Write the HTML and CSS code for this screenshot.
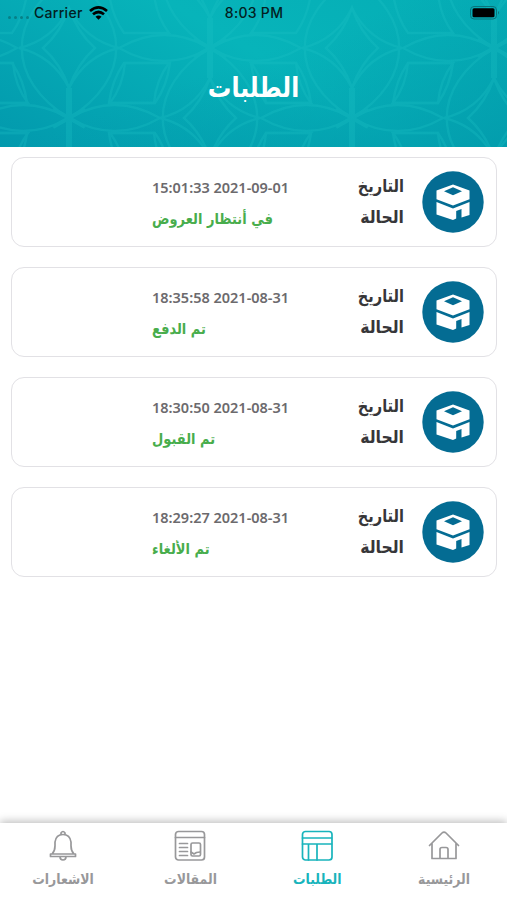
FILE: index.html
```html
<!DOCTYPE html>
<html lang="ar" dir="rtl">
<head>
<meta charset="utf-8">
<title>الطلبات</title>
<link rel="stylesheet" href="styles.css">
</head>
<body>
<svg class="defs" aria-hidden="true">
  <symbol id="kaaba" viewBox="0 0 62 62">
    <circle cx="31" cy="31" r="30.700" fill="#046c93"/>
    <path fill="#fff" fill-rule="evenodd" d="M31 13.500L47.500 19.500V28.200L31 34.500L14.500 28.200V19.500ZM31 16.300L22 20.200L31 24.300L40 20.200Z"/>
    <path fill="#fff" d="M14.500 31L31 37.400L47.500 31V44L39.500 46.500V38L34.200 40V47.500L31 49L14.500 43.500Z"/>
  </symbol>
</svg>
<div class="screen">
  <header class="header">
    <svg class="pattern" width="507" height="147" aria-hidden="true">
      <defs>
        <g id="cell">
          <path stroke-width="6" d="M0-30V30"/>
          <path stroke-width="4" d="M-16-9L16 9M-16 9L16-9"/>
          <path d="M0 0Q46-26 91 0Q46 26 0 0ZM0 0Q-46-26-91 0Q-46 26 0 0Z"/>
          <path d="M0 0C-63-38-63-102 0-140C63-102 63-38 0 0Z"/>
          <path d="M0-30Q16-62 50-70Q16-78 0-110Q-16-78-50-70Q-16-62 0-30Z"/>
          <path d="M0-30Q-8-54-26-70Q-8-86 0-110Q8-86 26-70Q8-54 0-30Z"/>
          <path d="M56-55H101Q98-32 86-15H41Q54-32 56-55ZM-56-55H-101Q-98-32-86-15H-41Q-54-32-56-55Z"/>
          <path d="M56 55H101Q98 32 86 15H41Q54 32 56 55ZM-56 55H-101Q-98 32-86 15H-41Q-54 32-56 55Z"/>
        </g>
      </defs>
      <g fill="none" stroke="#1fc3c7" stroke-width="2.400" opacity=".28">
        <use href="#cell" x="-74" y="48"/><use href="#cell" x="210" y="48"/><use href="#cell" x="494" y="48"/>
        <use href="#cell" x="69" y="118"/><use href="#cell" x="352" y="118"/>
        <use href="#cell" x="-74" y="188"/><use href="#cell" x="210" y="188"/><use href="#cell" x="494" y="188"/>
      </g>
    </svg>
    <div class="status" dir="ltr">
      <div class="carrier"><span class="dots"><i></i><i></i><i></i><i></i></span><span>Carrier</span>
        <svg width="19" height="14" viewBox="0 0 19 14"><g fill="none" stroke="#000" stroke-width="2.7"><path d="M1 5Q9.5-2.2 18 5M4 8.3Q9.500 3.700 15 8.300"/></g><path d="M6.500 10.700Q9.500 8.200 12.500 10.700L9.500 13.700Z"/></svg>
      </div>
      <span class="time">8:03 PM</span>
      <svg class="battery" width="30" height="14" viewBox="0 0 30 14"><rect x=".5" y=".5" width="26" height="12.500" rx="3.500" fill="none" stroke="#08747b"/><rect x="2.500" y="2.200" width="22" height="9" rx="1.500"/><path d="M28 5Q30 6.700 28 8.500Z" fill="#08747b"/></svg>
    </div>
    <h1>الطلبات</h1>
  </header>
  <main class="list">
    <article class="card"><svg class="logo"><use href="#kaaba"/></svg><dl><dt>التاريخ</dt><dd class="date">15:01:33 2021-09-01</dd><dt class="wide">الحالة</dt><dd class="state">في أنتظار العروض</dd></dl></article>
    <article class="card"><svg class="logo"><use href="#kaaba"/></svg><dl><dt>التاريخ</dt><dd class="date">18:35:58 2021-08-31</dd><dt class="wide">الحالة</dt><dd class="state">تم الدفع</dd></dl></article>
    <article class="card"><svg class="logo"><use href="#kaaba"/></svg><dl><dt>التاريخ</dt><dd class="date">18:30:50 2021-08-31</dd><dt class="wide">الحالة</dt><dd class="state">تم القبول</dd></dl></article>
    <article class="card"><svg class="logo"><use href="#kaaba"/></svg><dl><dt>التاريخ</dt><dd class="date">18:29:27 2021-08-31</dd><dt class="wide">الحالة</dt><dd class="state">تم الألغاء</dd></dl></article>
  </main>
  <nav class="tabs">
    <a class="tab"><svg viewBox="0 0 32 32"><path d="M1.500 15.500L14 3Q16 1 18 3L30.500 15.500M4 13.500V28.500H12V19.500Q12 17.500 14 17.500H18Q20 17.500 20 19.500V28.500H28V13.500M12 28.500H20"/></svg><span>الرئيسية</span></a>
    <a class="tab active"><svg viewBox="0 0 32 32"><rect x="1.500" y="1.500" width="29.500" height="28.500" rx="3"/><path d="M1.500 8H30.500M1.500 14H30.500M7.500 14V30M16 14V30"/></svg><span>الطلبات</span></a>
    <a class="tab"><svg viewBox="0 0 32 32"><rect x="1.500" y="1.500" width="29" height="28.500" rx="3"/><path d="M1.500 7.500H30.500M5.500 13.500H13.500M5.500 17.500H13.500M5.500 21.500H13.500M5.500 25.500H13.500M17 22L20 24L22.500 22.500L26 22"/><rect x="17" y="13" width="9.500" height="13" rx="1.500"/></svg><span>المقالات</span></a>
    <a class="tab"><svg viewBox="0 0 32 32"><path d="M14 4.500V3Q16 0 18 3V4.500M5 24Q8 21 8 16V12Q9 4.500 16 4.500T24 12V16Q24 21 27 24ZM3.500 24H28.500V26.500H3.500ZM13 26.500Q13 30 16 30T19 26.500"/></svg><span>الاشعارات</span></a>
  </nav>
</div>
</body>
</html>
```
FILE: styles.css
```css
* { box-sizing: border-box; }
body { margin: 0; background: #fff; font-family: "DejaVu Sans", sans-serif; font-weight: 700; }
.defs { position: absolute; width: 0; height: 0; }
.screen { width: 507px; height: 900px; display: flex; flex-direction: column; overflow: hidden; }
.header { position: relative; flex: none; height: 147px; background: linear-gradient(160deg, transparent 45%, #0299ab 110%), linear-gradient(30deg, #0299ad 0%, #07b4ba 55%, #05adb5 100%); }
.pattern { position: absolute; inset: 0; }
.status { position: relative; height: 25px; display: grid; grid-template-columns: 1fr auto 1fr; align-items: center; padding: 0 7px 0 8px; font: 500 14px Inter, sans-serif; letter-spacing: .3px; color: #032022; }
.carrier { display: flex; align-items: center; gap: 6px; }
.dots { display: flex; gap: 3px; padding-top: 9px; margin-right: -1px; }
.dots i { width: 3px; height: 3px; border-radius: 50%; background: #078087; }
.battery { justify-self: end; }
h1 { position: relative; margin: 46px 0 0; text-align: center; font-size: 25px; line-height: 34px; color: #fff; transform: scale(.94, 1.08); }
.list { flex: 1; display: flex; flex-direction: column; gap: 20px; padding: 10px 10px 0 11px; }
.card { height: 90px; border: 1px solid #e2e1e5; border-radius: 13px; display: flex; align-items: center; gap: 18px; padding: 0 12px; }
.logo { width: 62px; height: 62px; flex: none; }
dl { margin: 0; padding-top: 1px; display: grid; grid-template-columns: 114px 138px; grid-auto-rows: 31px; align-items: center; }
dt { padding-bottom: 2px; font-size: 16px; color: #373639; transform: scale(.91, 1.1); transform-origin: right center; }
.wide { transform: scale(.98, 1.1); }
dd { margin: 0; white-space: nowrap; }
.date { direction: ltr; font: 600 14px "Noto Sans", sans-serif; color: #6c6a6d; transform: scaleX(1.035); transform-origin: left center; }
.state { direction: ltr; padding-top: 2px; font-size: 14px; color: #48ad4c; transform: scale(.93, 1.08); transform-origin: left center; }
.tabs { flex: none; height: 77px; display: grid; grid-template-columns: repeat(4, 1fr); box-shadow: 0 -2px 8px rgba(0,0,0,.25); }
.tab { display: flex; flex-direction: column; align-items: center; padding-top: 7px; gap: 8px; font-size: 13px; line-height: 20px; color: #98989a; }
.tab svg { width: 32px; height: 32px; fill: none; stroke: currentColor; stroke-width: 1.700; stroke-linejoin: round; stroke-linecap: round; }
.tab span { transform: scale(.96, 1.08); }
.active { color: #18b4bc; }
```
